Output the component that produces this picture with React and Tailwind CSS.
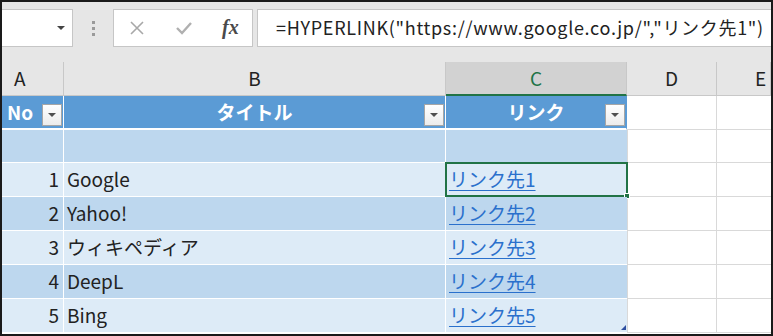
import React from 'react'

const font = "font-['Noto_Sans_CJK_JP',sans-serif]"

const rows = [
  { no: 1, title: 'Google', link: 'リンク先1', bg: 'bg-[#ddebf7]' },
  { no: 2, title: 'Yahoo!', link: 'リンク先2', bg: 'bg-[#bdd7ee]' },
  { no: 3, title: 'ウィキペディア', link: 'リンク先3', bg: 'bg-[#ddebf7]' },
  { no: 4, title: 'DeepL', link: 'リンク先4', bg: 'bg-[#bdd7ee]' },
  { no: 5, title: 'Bing', link: 'リンク先5', bg: 'bg-[#ddebf7]' },
]

const cols = 'grid grid-cols-[62px_382px_181px_90px_1fr]'

function FilterBtn(){
  return (
    <div className="absolute right-[1px] bottom-[2px] w-[20px] h-[22px] bg-gradient-to-b from-white to-[#ececec] border border-[#a6a6a6] flex items-center justify-center">
      <div className="w-0 h-0 border-l-[4px] border-r-[4px] border-t-[4px] border-l-transparent border-r-transparent border-t-[#505050]" />
    </div>
  )
}

function FormulaBar(){
  return (
    <div className="h-[60px] flex items-start pt-[7px] bg-[#e6e6e6]">
      <div className="w-[71px] h-[38px] bg-white border border-l-0 border-[#c6c6c6] flex items-center justify-end pr-[7px]">
        <div className="w-0 h-0 border-l-[4px] border-r-[4px] border-t-[4px] border-l-transparent border-r-transparent border-t-[#444]" />
      </div>
      <div className="w-[40px] h-[38px] flex flex-col items-center justify-center gap-[3px]">
        <span className="w-[3px] h-[3px] bg-[#9a9a9a]" />
        <span className="w-[3px] h-[3px] bg-[#9a9a9a]" />
        <span className="w-[3px] h-[3px] bg-[#9a9a9a]" />
      </div>
      <div className="w-[140px] h-[38px] bg-white border border-[#c6c6c6] flex items-center">
        <svg width="16" height="16" viewBox="0 0 16 16" className="ml-[15px]">
          <path d="M2 2 L14 14 M14 2 L2 14" stroke="#a8a8a8" strokeWidth="1.6" fill="none" />
        </svg>
        <svg width="18" height="16" viewBox="0 0 18 16" className="ml-[30px]">
          <path d="M2 8 L7 13 L16 3" stroke="#b0b0b0" strokeWidth="2.4" fill="none" />
        </svg>
        <span className="ml-[29px] font-['Liberation_Serif',serif] italic font-semibold text-[20px] text-[#4a4a4a] pb-[2px]">fx</span>
      </div>
      <div className="w-[4px]" />
      <div className={`flex-1 h-[38px] bg-white border border-r-0 border-[#c6c6c6] flex items-center pl-[18px] pb-[2px] text-[18px] tracking-[0.7px] text-[#222] whitespace-nowrap overflow-hidden ${font}`}>
        =HYPERLINK("https://www.google.co.jp/","リンク先1")
      </div>
    </div>
  )
}

function ColHeaders(){
  const letters = ['A', 'B', 'C', 'D', 'E']
  return (
    <div className={`${cols} h-[34px] ${font} text-[19px]`}>
      {letters.map((l, i) => (
        <div
          key={l}
          className={`flex items-center border-r border-[#c8c8c8] ${i === 2 ? 'bg-[#d2d2d2] text-[#217346] border-b-2 border-b-[#217346]' : 'bg-[#e6e6e6] text-[#222] border-b border-b-[#c8c8c8]'} ${i === 0 ? 'pl-[12px]' : i === 4 ? 'pl-[38px]' : 'justify-center'}`}
        >
          {l}
        </div>
      ))}
    </div>
  )
}

function TableHeader(){
  return (
    <div className={`${cols} h-[34px] ${font} text-[19px] font-bold text-white`}>
      <div className="relative bg-[#5b9bd5] border-r border-white border-b-2 border-b-white flex items-center pl-[5px]">
        No<FilterBtn />
      </div>
      <div className="relative bg-[#5b9bd5] border-r border-white border-b-2 border-b-white flex items-center justify-center">
        タイトル<FilterBtn />
      </div>
      <div className="relative bg-[#5b9bd5] border-r border-[#5b9bd5] border-b-2 border-b-white flex items-center justify-center">
        リンク<FilterBtn />
      </div>
      <div className="bg-white border-r border-b border-[#d9d9d9]" />
      <div className="bg-white border-b border-[#d9d9d9]" />
    </div>
  )
}

function DataRow({ r, h, selected }){
  return (
    <div className={`${cols} ${h} ${font} text-[19px] text-[#222]`}>
      <div className={`${r.bg} border-r border-b border-white flex items-center justify-end pr-[4px]`}>{r.no}</div>
      <div className={`${r.bg} border-r border-b border-white flex items-center pl-[3px] whitespace-nowrap`}>{r.title}</div>
      <div className={`relative ${r.bg} border-b border-white flex items-center pl-[3px]`}>
        {r.link && <span className="text-[#2a70cc] underline underline-offset-[3px] decoration-1">{r.link}</span>}
        {selected && (
          <div className="absolute left-[-1px] top-[-1px] right-[-1px] bottom-[-1px] border-2 border-[#217346]">
            <div className="absolute right-[-4px] bottom-[-4px] w-[6px] h-[6px] bg-[#217346] border border-white" />
          </div>
        )}
        {r.no === 5 && (
          <div className="absolute right-[1px] bottom-[2px] w-0 h-0 border-l-[5px] border-b-[5px] border-l-transparent border-b-[#2f4fa0]" />
        )}
      </div>
      <div className="bg-white border-l border-r border-b border-[#d9d9d9]" />
      <div className="bg-white border-b border-[#d9d9d9]" />
    </div>
  )
}

export default function App(){
  return (
    <div className="w-[773px] h-[336px] border-2 border-[#1a1a1a] bg-white overflow-hidden flex flex-col">
      <FormulaBar />
      <ColHeaders />
      <TableHeader />
      <DataRow r={{ no: '', title: '', link: '', bg: 'bg-[#bdd7ee]' }} h="h-[33px]" />
      {rows.map(r => (
        <DataRow key={r.no} r={r} h="h-[34px]" selected={r.no === 1} />
      ))}
    </div>
  )
}
